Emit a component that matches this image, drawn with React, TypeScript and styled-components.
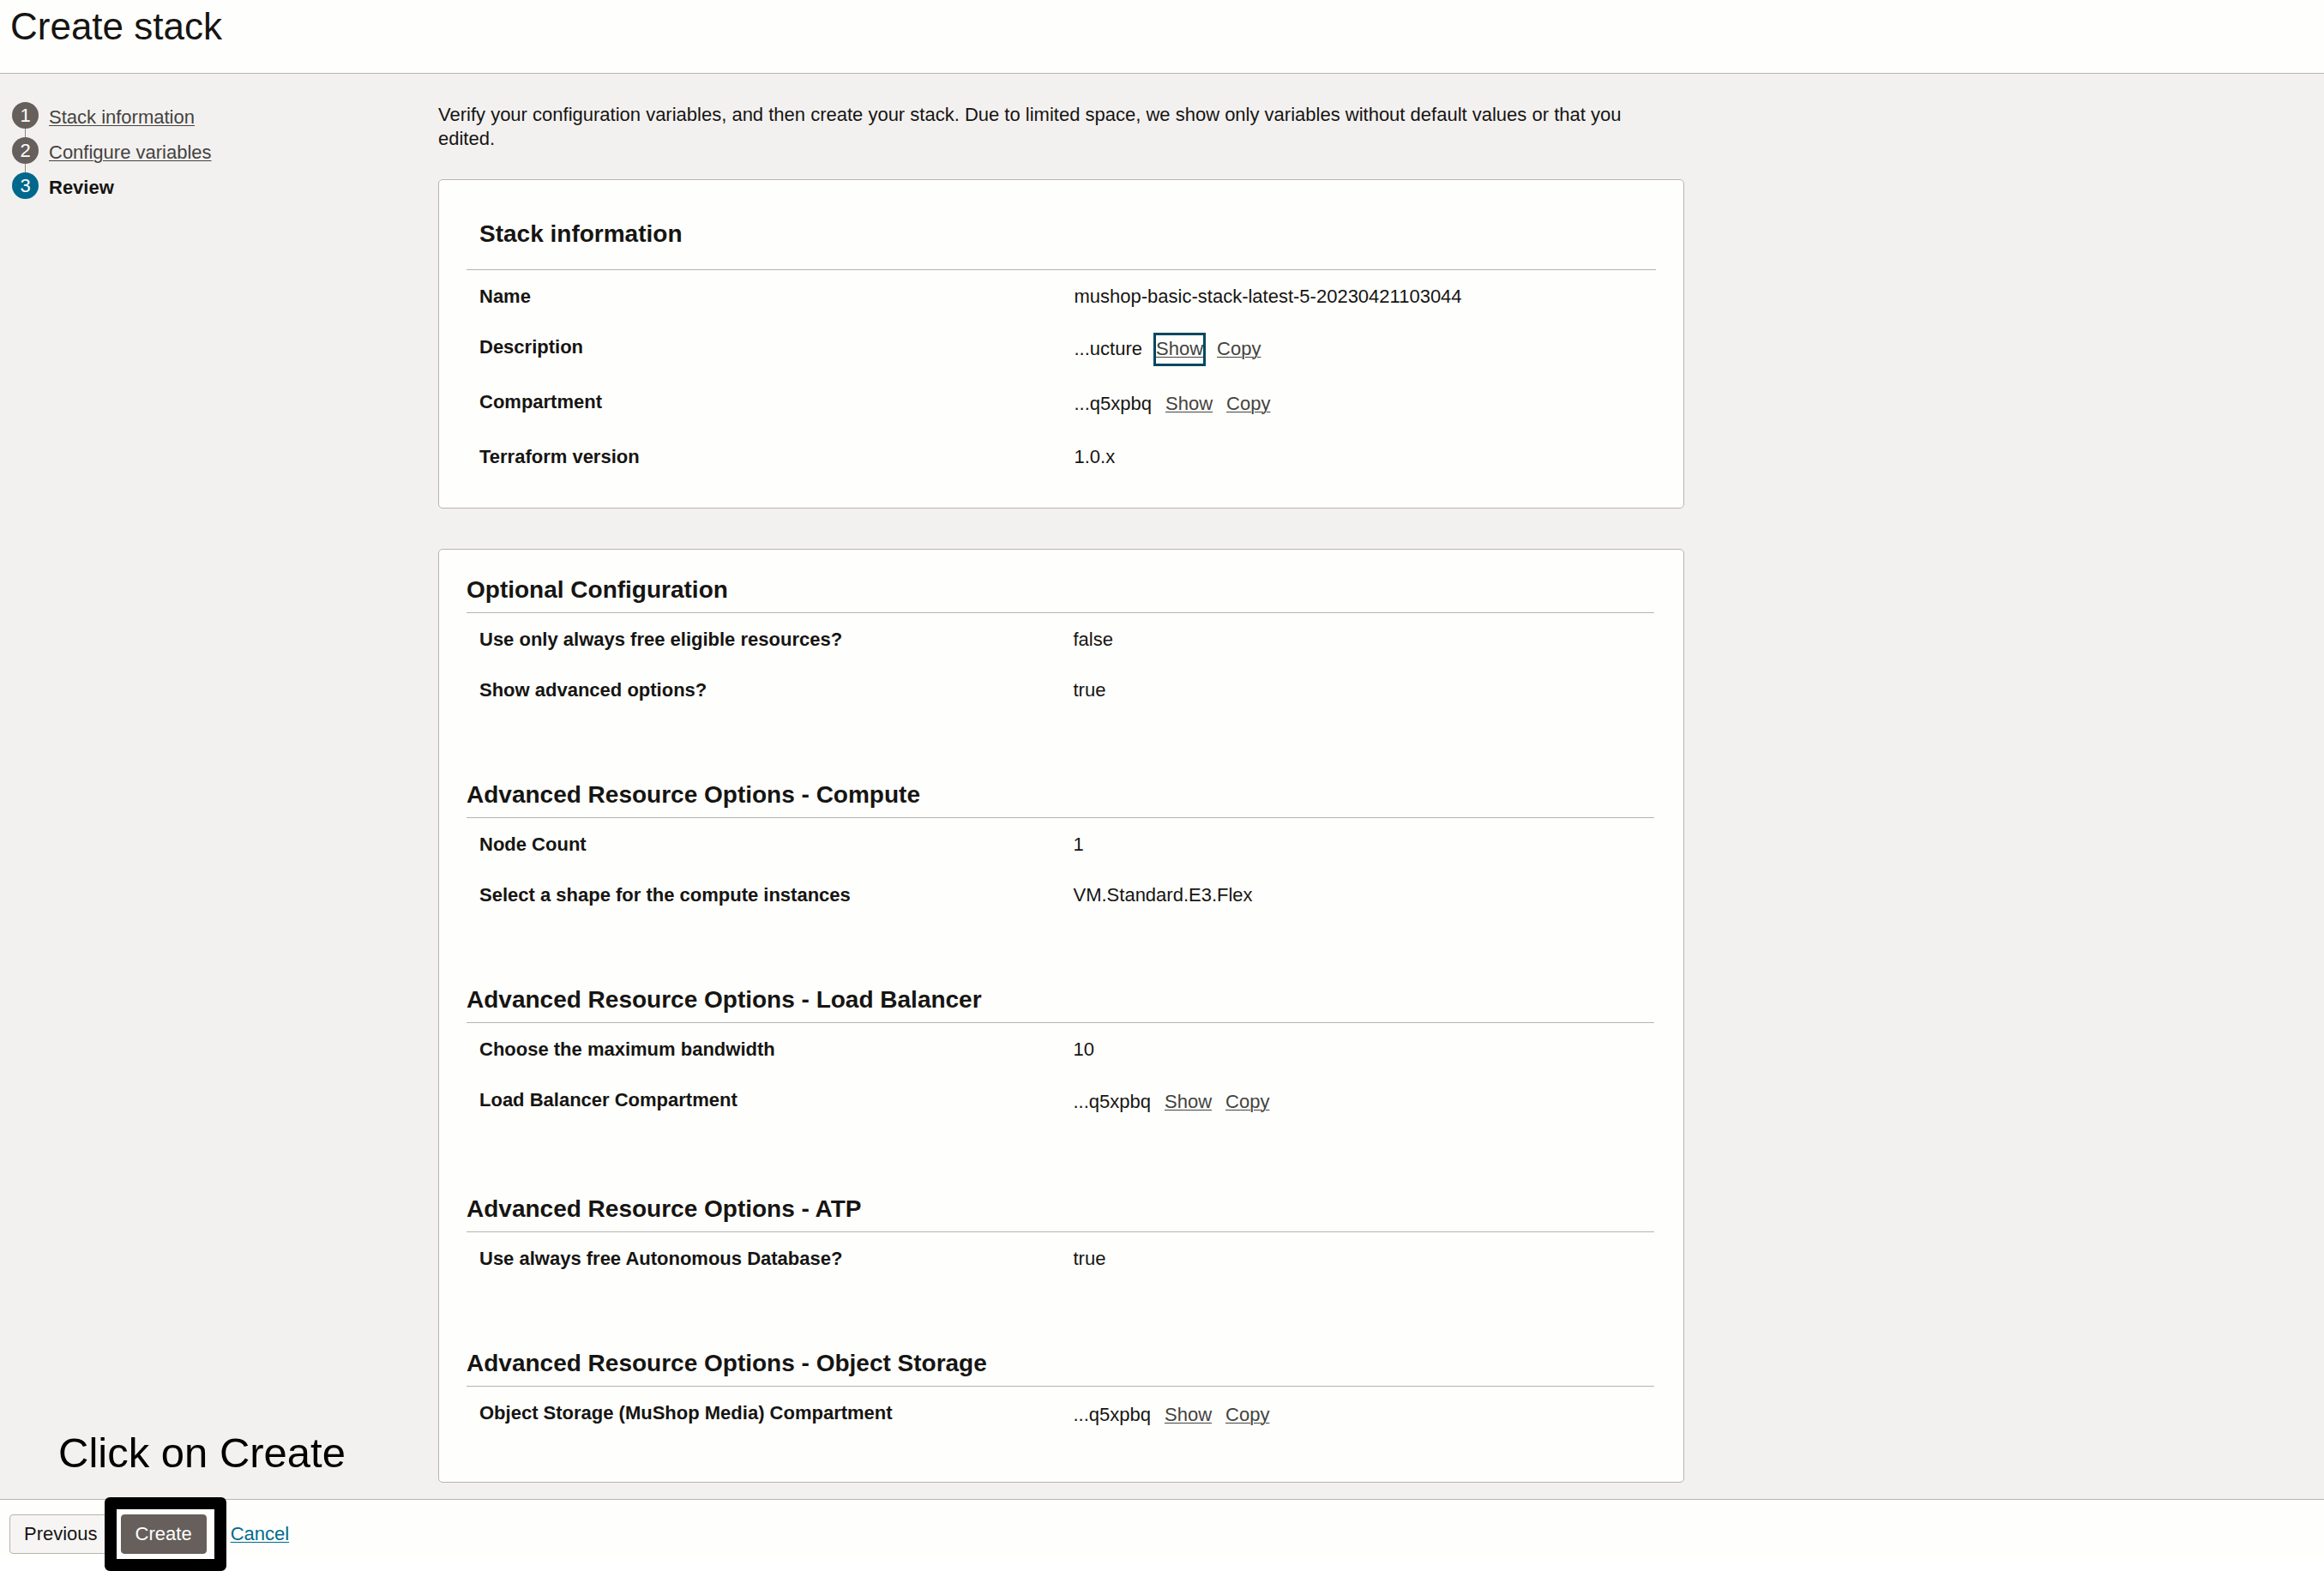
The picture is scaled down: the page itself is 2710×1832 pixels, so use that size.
import React from "react";
import styled, { createGlobalStyle } from "styled-components";

const text = "#161513";
const link = "#444340";
const line = "#b8b4ae";

const GlobalStyle = createGlobalStyle`
  * { box-sizing: border-box; }
  html, body { margin: 0; background: #ffffff; }
  body, button {
    font-family: "Helvetica Neue", "Liberation Sans", Arial, sans-serif;
    font-size: 22px;
    line-height: 28px;
    color: ${text};
  }
`;

const Page = styled.div`
  display: flex;
  flex-direction: column;
  min-height: 100vh;
`;

const Header = styled.header`
  padding: 7px 12px 30px;
  background: #fefefc;
  border-bottom: 1px solid ${line};
`;

const Title = styled.h1`
  margin: 0;
  font-size: 44px;
  line-height: 48px;
  font-weight: 400;
`;

const Body = styled.div`
  position: relative;
  display: grid;
  grid-template-columns: 485px minmax(0, 1453px);
  column-gap: 12px;
  padding: 33px 14px 19px;
  background: #f3f1f0;
`;

const Steps = styled.ol`
  list-style: none;
  margin: 0;
  padding: 0;
`;

const Step = styled.li`
  display: flex;
  align-items: flex-start;
  gap: 12px;
  height: 41px;
`;

const Marker = styled.span<{ $current?: boolean }>`
  display: flex;
  flex: none;
  align-items: center;
  justify-content: center;
  width: 31px;
  height: 31px;
  border-radius: 50%;
  background: ${(p) => (p.$current ? "#00688c" : "#665f5b")};
  color: #ffffff;
`;

const Rail = styled.span`
  display: flex;
  flex-direction: column;
  align-items: center;
  align-self: stretch;
`;

const Connector = styled.span`
  flex: 1;
  width: 1px;
  background: #8b8580;
`;

const StepLabel = styled.span`
  padding-top: 4px;
`;

const TextLink = styled.a<{ $tone?: string }>`
  color: ${(p) => p.$tone ?? link};
  text-decoration: underline;
  text-decoration-thickness: 1px;
  text-underline-offset: 2px;
`;

const Intro = styled.p`
  margin: 0 0 33px;
  padding: 1px 32px 0 0;
`;

const Card = styled.section<{ $compact?: boolean }>`
  padding: ${(p) => (p.$compact ? "29px 34px 47px 32px" : "45px 32px 31px")};
  background: #fefefc;
  border: 1px solid ${line};
  border-radius: 5px;
  & + & { margin-top: 47px; }
`;

const CardTitle = styled.h2`
  margin: 0;
  padding: 0 15px 23px;
  font-size: 28px;
  line-height: 36px;
  border-bottom: 1px solid ${line};
`;

const Group = styled.section`
  & + & { margin-top: 76px; }
`;

const GroupTitle = styled.h3`
  margin: 0;
  padding-bottom: 8px;
  font-size: 28px;
  line-height: 36px;
  border-bottom: 1px solid ${line};
`;

const Rows = styled.dl`
  margin: 0;
`;

const Row = styled.div`
  display: grid;
  grid-template-columns: 1fr 1fr;
  padding: 17px 0 14px;
`;

const Term = styled.dt`
  padding-left: 15px;
  font-weight: 700;
`;

const Value = styled.dd`
  display: flex;
  align-items: baseline;
  gap: 16px;
  margin: 0;
  padding-left: 15px;
`;

const LinkButton = styled.button<{ $focused?: boolean }>`
  padding: 2px 0 3px;
  border: 0;
  background: none;
  color: ${link};
  text-decoration: underline;
  text-decoration-thickness: 1px;
  text-underline-offset: 2px;
  outline: ${(p) => (p.$focused ? "3px solid #00485f" : "none")};
`;

const Footer = styled.footer`
  display: flex;
  align-items: center;
  gap: 28px;
  padding: 17px 11px 4px;
  background: #fefefc;
  border-top: 1px solid ${line};
`;

const ButtonGroup = styled.div`
  display: flex;
  gap: 10px;
`;

const Button = styled.button<{ $primary?: boolean }>`
  height: 46px;
  padding: 0 16px;
  border: 1px solid ${(p) => (p.$primary ? "#665f5b" : line)};
  border-radius: 4px;
  background: ${(p) => (p.$primary ? "#665f5b" : "#f6f5f4")};
  color: ${(p) => (p.$primary ? "#ffffff" : text)};
`;

const Highlighted = styled.span`
  position: relative;
  display: flex;
`;

const HighlightFrame = styled.span`
  position: absolute;
  inset: -20px -23px -20px -19px;
  border: 14px solid #000000;
  border-radius: 6px;
  pointer-events: none;
`;

const Callout = styled.p`
  position: absolute;
  left: 68px;
  bottom: 28px;
  margin: 0;
  font-size: 49px;
  line-height: 52px;
  color: #000000;
`;

type Entry = { label: string; value: string; links?: boolean; focused?: boolean };

const stackInfo: Entry[] = [
  { label: "Name", value: "mushop-basic-stack-latest-5-20230421103044" },
  { label: "Description", value: "...ucture", links: true, focused: true },
  { label: "Compartment", value: "...q5xpbq", links: true },
  { label: "Terraform version", value: "1.0.x" },
];

const groups: { title: string; entries: Entry[] }[] = [
  {
    title: "Optional Configuration",
    entries: [
      { label: "Use only always free eligible resources?", value: "false" },
      { label: "Show advanced options?", value: "true" },
    ],
  },
  {
    title: "Advanced Resource Options - Compute",
    entries: [
      { label: "Node Count", value: "1" },
      { label: "Select a shape for the compute instances", value: "VM.Standard.E3.Flex" },
    ],
  },
  {
    title: "Advanced Resource Options - Load Balancer",
    entries: [
      { label: "Choose the maximum bandwidth", value: "10" },
      { label: "Load Balancer Compartment", value: "...q5xpbq", links: true },
    ],
  },
  {
    title: "Advanced Resource Options - ATP",
    entries: [{ label: "Use always free Autonomous Database?", value: "true" }],
  },
  {
    title: "Advanced Resource Options - Object Storage",
    entries: [{ label: "Object Storage (MuShop Media) Compartment", value: "...q5xpbq", links: true }],
  },
];

function Entries({ entries }: { entries: Entry[] }) {
  return (
    <Rows>
      {entries.map((e) => (
        <Row key={e.label}>
          <Term>{e.label}</Term>
          <Value>
            <span>{e.value}</span>
            {e.links && (
              <>
                <LinkButton type="button" $focused={e.focused}>Show</LinkButton>
                <LinkButton type="button">Copy</LinkButton>
              </>
            )}
          </Value>
        </Row>
      ))}
    </Rows>
  );
}

export default function App() {
  return (
    <Page>
      <GlobalStyle />
      <Header>
        <Title>Create stack</Title>
      </Header>
      <Body>
        <nav aria-label="Steps">
          <Steps>
            <Step>
              <Rail><Marker>1</Marker><Connector /></Rail>
              <StepLabel><TextLink href="#information">Stack information</TextLink></StepLabel>
            </Step>
            <Step>
              <Rail><Marker>2</Marker><Connector /></Rail>
              <StepLabel><TextLink href="#variables">Configure variables</TextLink></StepLabel>
            </Step>
            <Step>
              <Rail><Marker $current>3</Marker></Rail>
              <StepLabel aria-current="step"><b>Review</b></StepLabel>
            </Step>
          </Steps>
        </nav>
        <main>
          <Intro>
            Verify your configuration variables, and then create your stack. Due to limited space, we show only
            variables without default values or that you edited.
          </Intro>
          <Card>
            <CardTitle>Stack information</CardTitle>
            <Entries entries={stackInfo} />
          </Card>
          <Card $compact>
            {groups.map((g) => (
              <Group key={g.title}>
                <GroupTitle>{g.title}</GroupTitle>
                <Entries entries={g.entries} />
              </Group>
            ))}
          </Card>
        </main>
        <Callout>Click on Create</Callout>
      </Body>
      <Footer>
        <ButtonGroup>
          <Button type="button">Previous</Button>
          <Highlighted>
            <Button type="button" $primary>Create</Button>
            <HighlightFrame />
          </Highlighted>
        </ButtonGroup>
        <TextLink href="#cancel" $tone="#006b8f">Cancel</TextLink>
      </Footer>
    </Page>
  );
}
